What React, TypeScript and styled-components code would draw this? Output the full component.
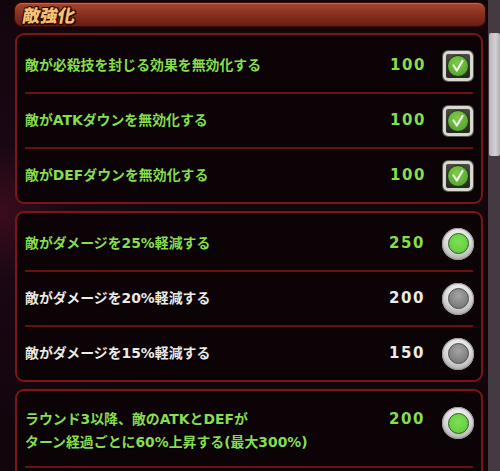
import styled, { createGlobalStyle } from 'styled-components';

const GlobalStyle = createGlobalStyle`
  body {
    margin: 0;
    background: #14060e;
    font-family: 'DejaVu Sans', 'Noto Sans CJK JP', sans-serif;
  }
`;

const Screen = styled.div`
  width: 500px;
  height: 471px;
  overflow: hidden;
  display: flex;
  background: radial-gradient(circle at 0 45%, #3a0c1c 0, #1a0714 12%, #12050c 40%);
`;

const Content = styled.div`
  flex: 1;
  padding: 3px 3px 0 15px;
  display: flex;
  flex-direction: column;
  gap: 7px;
`;

const Scrollbar = styled.div`
  width: 12px;
  background: #463a42;
  padding-top: 33px;
`;

const Thumb = styled.div`
  height: 123px;
  margin-left: 1px;
  background: linear-gradient(90deg, #b8b6b8, #d2d0d2 60%, #b0aeb0);
  border-radius: 2px;
`;

const TitleBar = styled.div`
  height: 23px;
  flex-shrink: 0;
  border-radius: 7px;
  background: linear-gradient(180deg, #a8462c 0%, #8a3220 45%, #6a1c12 100%);
  box-shadow: inset 0 1px 0 rgba(255, 170, 120, 0.35), 0 0 0 1px #3a0c08;
  display: flex;
  align-items: center;
  padding-left: 8px;
`;

const Title = styled.span`
  font-family: 'Noto Sans CJK JP', sans-serif;
  font-size: 17.5px;
  line-height: 20px;
  font-weight: 900;
  color: #f7c277;
  display: inline-block;
  transform: skewX(-10deg);
  text-shadow: -1px -1px 0 #2a0c04, 1px -1px 0 #2a0c04, -1px 1px 0 #2a0c04,
    1px 1px 0 #2a0c04, 0 2px 0 #2a0c04, 2px 1px 0 #2a0c04;
`;

const Panel = styled.div`
  margin-right: 2px;
  border: 2px solid #7c1616;
  border-radius: 9px;
  background: #0c0306;
  padding: 4px 8px 0 8px;
  display: flex;
  flex-direction: column;
  flex-shrink: 0;
`;

const Row = styled.div<{ $tall?: boolean }>`
  height: ${({ $tall }) => ($tall ? '58px' : '53px')};
  display: flex;
  align-items: ${({ $tall }) => ($tall ? 'flex-start' : 'center')};
  padding-top: ${({ $tall }) => ($tall ? '13px' : '0')};
  flex-shrink: 0;

  & + & {
    border-top: 2px solid #6a1212;
  }
`;

const Label = styled.div<{ $on: boolean }>`
  flex: 1;
  font-size: 13.9px;
  font-weight: 700;
  line-height: 23px;
  color: ${({ $on }) => ($on ? '#86de4e' : '#ecebe6')};
  text-shadow: 0 1px 1px #000;
`;

const Value = styled.div<{ $on: boolean }>`
  font-size: 15px;
  font-weight: 700;
  line-height: 23px;
  letter-spacing: 1.6px;
  color: ${({ $on }) => ($on ? '#86de4e' : '#ecebe6')};
  margin-right: 17px;
`;

const CheckBox = styled.div`
  width: 30px;
  height: 30px;
  box-sizing: border-box;
  border: 3px solid #d9d8cc;
  border-radius: 5px;
  background: linear-gradient(180deg, #4a4a48, #262624);
  box-shadow: 0 0 0 1px #555;
  display: flex;
  align-items: center;
  justify-content: center;
`;

const CheckDot = styled.div`
  width: 20px;
  height: 20px;
  border-radius: 50%;
  background: radial-gradient(circle at 45% 35%, #7ccc48, #4e9a2a);
  border: 1px solid #1e3a10;
  display: flex;
  align-items: center;
  justify-content: center;
`;

const Radio = styled.div<{ $lift?: boolean }>`
  width: 32px;
  height: 32px;
  box-sizing: border-box;
  border-radius: 50%;
  background: radial-gradient(circle at 50% 35%, #ffffff 0%, #d8d8d8 50%, #8a8a8a 100%);
  box-shadow: inset 0 0 0 1px #9a9a9a;
  display: flex;
  align-items: center;
  justify-content: center;
  margin-right: -1px;
  margin-top: ${({ $lift }) => ($lift ? '-1px' : '0')};
`;

const RadioDot = styled.div<{ $on: boolean }>`
  width: 19px;
  height: 19px;
  border-radius: 50%;
  border: 1px solid ${({ $on }) => ($on ? '#2c5a1a' : '#4a4a4a')};
  background: ${({ $on }) =>
    $on
      ? 'radial-gradient(circle at 50% 40%, #7ee055, #5cc63a)'
      : 'radial-gradient(circle at 50% 35%, #a4a4a4, #6e6e6e)'};
`;

const Check = () => (
  <CheckBox>
    <CheckDot>
      <svg width="14" height="14" viewBox="0 0 14 14">
        <path d="M2.5 6.5 L5.8 11.5 L11.5 2" fill="none" stroke="#f4f4f0" strokeWidth="2.2" strokeLinecap="round" strokeLinejoin="round" />
      </svg>
    </CheckDot>
  </CheckBox>
);

type Item = { label: string; value: number; on: boolean };

const fixed: Item[] = [
  { label: '敵が必殺技を封じる効果を無効化する', value: 100, on: true },
  { label: '敵がATKダウンを無効化する', value: 100, on: true },
  { label: '敵がDEFダウンを無効化する', value: 100, on: true },
];

const damage: Item[] = [
  { label: '敵がダメージを25%軽減する', value: 250, on: true },
  { label: '敵がダメージを20%軽減する', value: 200, on: false },
  { label: '敵がダメージを15%軽減する', value: 150, on: false },
];

const App = () => (
  <>
    <GlobalStyle />
    <Screen>
      <Content>
        <TitleBar>
          <Title>敵強化</Title>
        </TitleBar>
        <Panel>
          {fixed.map((it) => (
            <Row key={it.label}>
              <Label $on={it.on}>{it.label}</Label>
              <Value $on={it.on}>{it.value}</Value>
              <Check />
            </Row>
          ))}
        </Panel>
        <Panel>
          {damage.map((it) => (
            <Row key={it.label}>
              <Label $on={it.on}>{it.label}</Label>
              <Value $on={it.on}>{it.value}</Value>
              <Radio>
                <RadioDot $on={it.on} />
              </Radio>
            </Row>
          ))}
        </Panel>
        <Panel>
          <Row $tall>
            <Label $on>
              ラウンド3以降、敵のATKとDEFが
              <br />
              ターン経過ごとに60%上昇する(最大300%)
            </Label>
            <Value $on>200</Value>
            <Radio $lift>
              <RadioDot $on />
            </Radio>
          </Row>
          <Row $tall />
        </Panel>
      </Content>
      <Scrollbar>
        <Thumb />
      </Scrollbar>
    </Screen>
  </>
);

export default App;
